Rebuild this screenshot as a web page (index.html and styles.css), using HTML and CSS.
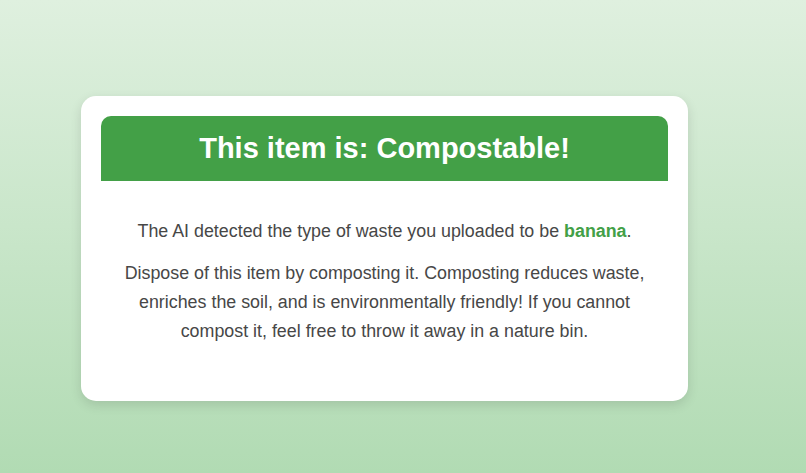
FILE: index.html
```html
<!DOCTYPE html>
<html>
<head>
<meta charset="utf-8">
<link rel="stylesheet" href="styles.css">
</head>
<body>
<main class="page">
  <section class="card">
    <h1 class="banner">This item is: Compostable!</h1>
    <div class="content">
      <p class="detected">The AI detected the type of waste you uploaded to be <strong class="item">banana</strong>.</p>
      <p class="advice">Dispose of this item by composting it. Composting reduces waste, enriches the soil, and is environmentally friendly! If you cannot compost it, feel free to throw it away in a nature bin.</p>
    </div>
  </section>
</main>
</body>
</html>
```

FILE: styles.css
```css
html, body {
  margin: 0;
  height: 100%;
}
body {
  background: linear-gradient(to bottom, #dff0df 0%, #b1dbb3 100%);
  font-family: "Liberation Sans", Arial, sans-serif;
  color: #474747;
}
.page {
  padding-top: 96px;
  padding-left: 81px;
}
.card {
  box-sizing: border-box;
  width: 607px;
  height: 305px;
  background: #fff;
  border-radius: 15px;
  padding: 20px;
  box-shadow: 0 4px 12px rgba(0, 0, 0, 0.12);
}
.banner {
  margin: 0;
  height: 65px;
  background: #43a047;
  color: #fff;
  border-radius: 10px 10px 0 0;
  font-size: 29px;
  font-weight: bold;
  text-align: center;
  line-height: 65px;
}
.content {
  padding-top: 36px;
  text-align: center;
}
.content p {
  margin: 0;
  font-size: 17.85px;
  line-height: 29px;
}
.detected {
  margin-bottom: 13px !important;
}
.advice {
  padding: 0 12px;
}
.item {
  color: #43a047;
}
```
